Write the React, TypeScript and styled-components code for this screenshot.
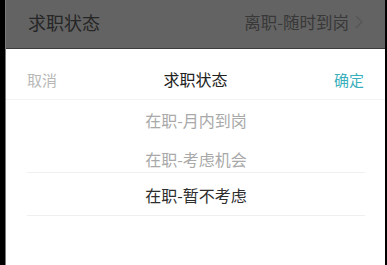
import React from "react";
import styled, { createGlobalStyle } from "styled-components";

const Global = createGlobalStyle`
  html, body { margin: 0; padding: 0; background: #000; }
  body { font-family: "Noto Sans CJK SC", "Noto Sans", sans-serif; }
`;

const Screen = styled.div`
  width: 387px;
  height: 265px;
  display: flex;
  background: #000;
  overflow: hidden;
`;

const Frame = styled.div`
  margin-left: 5px;
  width: 380px;
  height: 265px;
  display: flex;
  flex-direction: column;
  background: #fff;
  border-left: 1px solid #7a7a7a;
  box-sizing: border-box;
`;

const TopBar = styled.div`
  height: 49px;
  box-sizing: border-box;
  background: #636363;
  border-bottom: 1px solid #3c3c3c;
  display: flex;
  align-items: center;
  justify-content: space-between;
  padding: 0 22px 4px 22px;
`;

const TopLabel = styled.span`
  font-size: 18px;
  color: #262626;
`;

const TopValue = styled.span`
  display: flex;
  align-items: center;
  gap: 6px;
  font-size: 16.5px;
  color: #383838;
`;

const Sheet = styled.div`
  flex: 1;
  display: flex;
  flex-direction: column;
  background: #fff;
`;

const SheetHeader = styled.div`
  height: 51px;
  box-sizing: border-box;
  padding: 10px 21px 0 21px;
  display: flex;
  align-items: center;
  justify-content: space-between;
  border-bottom: 1px solid #f3f3f3;
`;

const HeaderBtn = styled.span<{ $color: string }>`
  font-size: 15px;
  color: ${(p) => p.$color};
  width: 40px;
  text-align: ${(p) => (p.$color === "#b8b8b8" ? "left" : "right")};
`;

const Title = styled.span`
  font-size: 16px;
  color: #222;
`;

const List = styled.div`
  display: flex;
  flex-direction: column;
`;

const Option = styled.div<{ $h: number; $pt: number; $selected?: boolean }>`
  height: ${(p) => p.$h}px;
  padding-top: ${(p) => p.$pt}px;
  box-sizing: border-box;
  margin: 0 20px 0 21px;
  display: flex;
  align-items: center;
  justify-content: center;
  font-size: 16px;
  color: ${(p) => (p.$selected ? "#2e2e2e" : "#a9a9a9")};
  border-top: ${(p) => (p.$selected ? "1px solid #efefef" : "none")};
  border-bottom: ${(p) => (p.$selected ? "1px solid #efefef" : "none")};
`;

const Chevron = () => (
  <svg width="8" height="14" viewBox="0 0 8 14" fill="none">
    <path d="M1 1l6 6-6 6" stroke="#555" strokeWidth="1.2" />
  </svg>
);

export default function App() {
  return (
    <Screen>
      <Global />
      <Frame>
        <TopBar>
          <TopLabel>求职状态</TopLabel>
          <TopValue>
            离职-随时到岗
            <Chevron />
          </TopValue>
        </TopBar>
        <Sheet>
          <SheetHeader>
            <HeaderBtn $color="#b8b8b8">取消</HeaderBtn>
            <Title>求职状态</Title>
            <HeaderBtn $color="#3aafbc">确定</HeaderBtn>
          </SheetHeader>
          <List>
            <Option $h={40} $pt={0}>在职-月内到岗</Option>
            <Option $h={32} $pt={6}>在职-考虑机会</Option>
            <Option $h={44} $pt={2} $selected>
              在职-暂不考虑
            </Option>
          </List>
        </Sheet>
      </Frame>
    </Screen>
  );
}
